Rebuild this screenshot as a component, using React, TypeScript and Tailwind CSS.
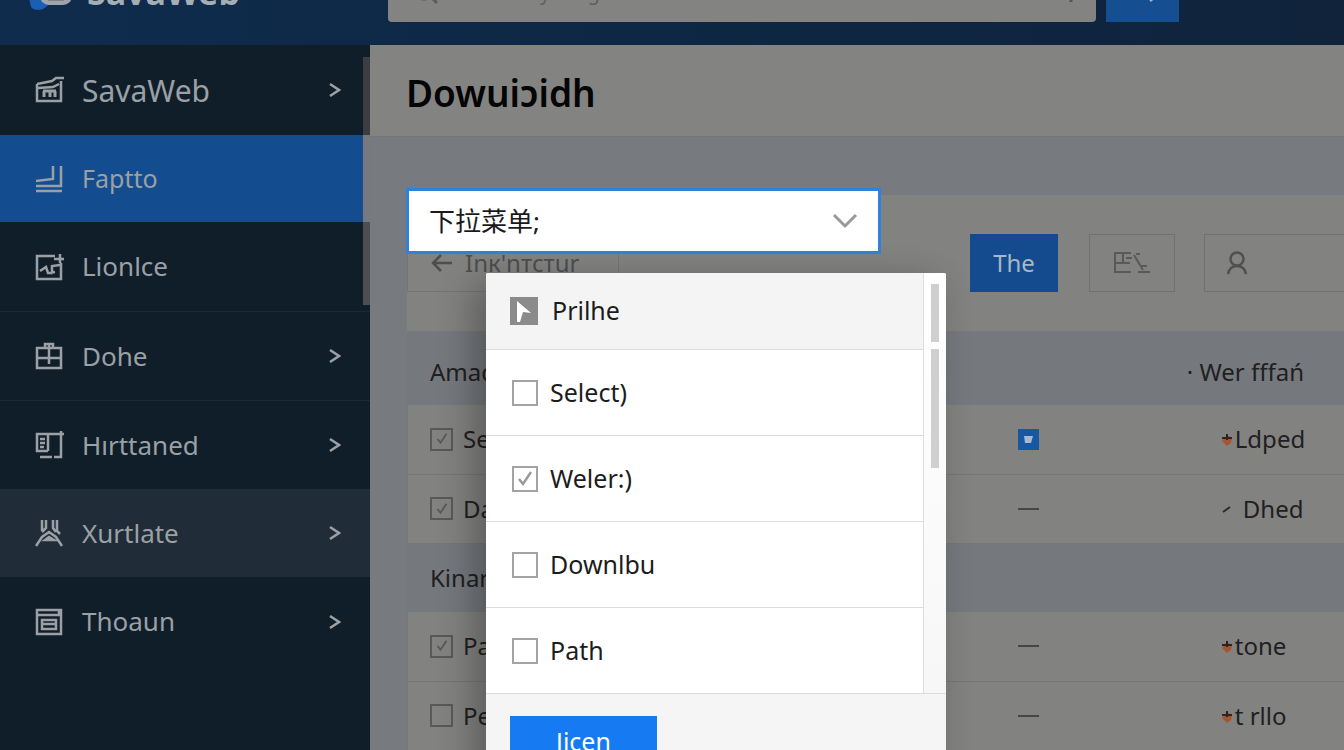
import type { ReactNode } from "react";
import clsx from "clsx";

type IconName =
  | "shop"
  | "stack"
  | "image"
  | "gift"
  | "frames"
  | "compass"
  | "document";

const iconPaths: Record<IconName, ReactNode> = {
  shop: (
    <>
      <path d="M2 8v17h24V5M2 8l15-3 4-3h8M3 12l15-1 6-3" />
      <path d="M8 15h13M9 15v6M15 16v5M20 15v6" strokeWidth="3" />
    </>
  ),
  stack: <path d="M1 26h26M1 21h25V1M1 16l17-2V1" />,
  image: (
    <>
      <path d="M20 3H2v23h24V10M19 6h10M25 1v9" />
      <path d="m5 18 6-4 2 6h4v-7l8-1M14 20l6-1" />
    </>
  ),
  gift: <path d="M2 6h24v20H2zM2 16h24M14 2v20M10 6V2h8v4" />,
  frames: (
    <>
      <path d="M13 20H2V3h27M13 3v17M19 26h7V0M5 26h12" />
      <path d="M5 8h5M5 12h5M5 16h4" />
    </>
  ),
  compass: (
    <path d="M7 1v11M11 1v8l-4 4M18 1v8l3 4M22 1v11l3 3M1 27l6-9 7-5 7 5 6 9M10 21l4-3 5 3z" />
  ),
  document: (
    <path d="M2 2h24v24H2zM3 7h21V3M7 12h14v9H7zM7 16h14" />
  ),
};

const navItems: {
  label: string;
  icon: IconName;
  arrow: boolean;
  className: string;
}[] = [
  { label: "SavaWeb", icon: "shop", arrow: true, className: "h-[90px] text-[30px]" },
  {
    label: "Faptto",
    icon: "stack",
    arrow: false,
    className: "mr-[7px] h-[87px] bg-[#144d8f] text-[25px]",
  },
  { label: "Lionlce", icon: "image", arrow: false, className: "h-[89px] text-[26px]" },
  {
    label: "Dohe",
    icon: "gift",
    arrow: true,
    className: "h-[89px] border-t border-[#1c2a35] text-[26px]",
  },
  {
    label: "Hırttaned",
    icon: "frames",
    arrow: true,
    className: "h-[89px] border-t border-[#1c2a35] text-[26px]",
  },
  {
    label: "Xurtlate",
    icon: "compass",
    arrow: true,
    className: "h-[88px] bg-[#202c38] text-[26px]",
  },
  { label: "Thoaun", icon: "document", arrow: true, className: "h-[89px] text-[26px]" },
];

const options = [
  { label: "Select)", checked: false },
  { label: "Weler:)", checked: true },
  { label: "Downlbu", checked: false },
  { label: "Path", checked: false },
];

type Row = {
  name: string;
  checked: boolean;
  flag: boolean;
  status: string;
  mark: "spark" | "tick";
};

const firstRows: Row[] = [
  { name: "Search", checked: true, flag: true, status: "Ldped", mark: "spark" },
  { name: "Data", checked: true, flag: false, status: "Dhed", mark: "tick" },
];

const secondRows: Row[] = [
  { name: "Path", checked: true, flag: false, status: "tone", mark: "spark" },
  { name: "Pe", checked: false, flag: false, status: "t rllo", mark: "spark" },
];

function Header() {
  return (
    <header className="flex h-[45px] shrink-0 items-end overflow-hidden bg-linear-to-r from-[#102c4d] via-[#0d2744] to-[#10233b] pb-[23px]">
      <div className="flex h-[60px] w-[388px] shrink-0 items-center gap-3.5 pl-7">
        <svg width="45" height="40" viewBox="0 0 45 40" aria-hidden="true">
          <path d="M4 0h32v28c-7 0-13 2-18 7-4 4-12 4-15 0L1 26z" fill="#1a5fb4" />
          <rect x="12" y="2" width="32" height="31" rx="9" fill="#9ea4aa" />
          <path d="M20 28h16" stroke="#7d8286" strokeWidth="2" />
        </svg>
        <span className="text-[34px] leading-8 font-bold text-[#a5adb5]">SavaWeb</span>
      </div>
      <div className="flex h-[60px] w-[708px] items-center rounded-sm bg-[#838382] pr-5 pl-6">
        <svg width="28" height="28" viewBox="0 0 28 28" fill="none" stroke="#5c5d5e" strokeWidth="3" aria-hidden="true">
          <circle cx="12" cy="12" r="9" />
          <path d="m18 18 7 7" />
        </svg>
        <input
          type="search"
          aria-label="Search"
          placeholder="Search anything"
          className="ml-2 h-8 min-w-0 flex-1 bg-transparent text-[20px] placeholder:text-[#5f6061]"
        />
        <svg width="10" height="24" viewBox="0 0 10 24" fill="none" stroke="#545556" strokeWidth="3" aria-hidden="true">
          <path d="M5 2v20" />
        </svg>
      </div>
      <button
        type="button"
        aria-label="Run search"
        className="ml-2.5 flex h-[60px] w-[73px] shrink-0 items-center justify-center bg-[#164f91]"
      >
        <svg width="26" height="22" viewBox="0 0 26 22" fill="none" stroke="#9eb6d2" strokeWidth="3" aria-hidden="true">
          <circle cx="11" cy="8" r="7" />
          <path d="m16 13 6 7" />
        </svg>
      </button>
    </header>
  );
}

function Sidebar() {
  return (
    <nav className="relative w-[370px] shrink-0 bg-[#101e2a] text-[#9ba0a5]">
      {navItems.map((item) => (
        <a
          key={item.label}
          href="#"
          className={clsx("flex items-center pl-[35px]", item.className)}
        >
          <svg
            width="30"
            height="28"
            viewBox="0 0 30 28"
            fill="none"
            stroke="currentColor"
            strokeWidth="2.5"
            aria-hidden="true"
          >
            {iconPaths[item.icon]}
          </svg>
          <span className="ml-[17px] flex-1">{item.label}</span>
          {item.arrow && (
            <svg
              width="12"
              height="16"
              viewBox="0 0 12 16"
              fill="none"
              stroke="currentColor"
              strokeWidth="2.5"
              className="mr-[29px]"
              aria-hidden="true"
            >
              <path d="m1 2 9 6-9 6" />
            </svg>
          )}
        </a>
      ))}
      <div className="absolute top-3 right-0 w-[7px]">
        <div className="h-[78px] bg-[#3a3e43]" />
        <div className="h-[87px] bg-[#77797c]" />
        <div className="h-[83px] bg-[#4b4e52]" />
      </div>
    </nav>
  );
}

function CheckBox({
  label,
  checked,
  dimmed = false,
}: {
  label: string;
  checked: boolean;
  dimmed?: boolean;
}) {
  return (
    <label className="flex items-center">
      <span className="grid shrink-0 place-items-center">
        <input
          type="checkbox"
          defaultChecked={checked}
          className={clsx(
            "peer col-start-1 row-start-1 appearance-none border-2",
            dimmed ? "size-[23px] border-[#58595a]" : "size-[26px] border-[#a3a3a3]",
          )}
        />
        <svg
          viewBox="0 0 16 16"
          fill="none"
          stroke="currentColor"
          strokeWidth="2.5"
          className={clsx(
            "pointer-events-none invisible col-start-1 row-start-1 peer-checked:visible",
            dimmed ? "size-3 text-[#58595a]" : "size-4 text-[#999999]",
          )}
          aria-hidden="true"
        >
          <path d="m2 8 4 5 8-12" />
        </svg>
      </span>
      <span className={dimmed ? "ml-2.5" : "ml-3"}>{label}</span>
    </label>
  );
}

function Mark({ kind }: { kind: Row["mark"] }) {
  return (
    <svg width="12" height="16" viewBox="0 0 12 16" fill="none" aria-hidden="true">
      {kind === "spark" ? (
        <>
          <path d="m6 4 5 3-1 5-4 3-5-5z" fill="#a5552f" />
          <path d="M1 7h10M6 3v6" stroke="#2e2522" strokeWidth="2" />
        </>
      ) : (
        <path d="m2 11 7-5" stroke="#2b2b2c" strokeWidth="2" />
      )}
    </svg>
  );
}

function DataRows({ rows }: { rows: Row[] }) {
  return rows.map((row) => (
    <tr key={row.name} className="h-[69px] border-b border-[#757676]">
      <td className="pl-[22px]">
        <CheckBox label={row.name} checked={row.checked} dimmed />
      </td>
      <td className="pl-0.5">
        {row.flag ? (
          <svg width="21" height="21" viewBox="0 0 21 21" aria-hidden="true">
            <path d="M0 0h21v21H0z" fill="#1757a3" />
            <path d="M6 7h9l-2 7H7z" fill="#a9b9cc" />
          </svg>
        ) : (
          <svg width="21" height="2" viewBox="0 0 21 2" aria-label="None">
            <path d="M0 0h21v2H0z" fill="#454647" />
          </svg>
        )}
      </td>
      <td className="pl-9">
        <span className={clsx("flex items-center", row.mark === "tick" ? "gap-2.5" : "gap-0.5")}>
          <Mark kind={row.mark} />
          {row.status}
        </span>
      </td>
    </tr>
  ));
}

function Toolbar() {
  return (
    <div className="flex py-[39px]">
      <button
        type="button"
        className="flex h-[58px] w-[212px] shrink-0 items-center gap-3 border border-[#747576] pl-[22px] text-[24px] text-[#4d4e4f]"
      >
        <svg width="23" height="20" viewBox="0 0 23 20" fill="none" stroke="currentColor" strokeWidth="2.5" aria-hidden="true">
          <path d="M22 10H3M11 2l-8 8 8 8" />
        </svg>
        Inк'nтcтur
      </button>
      <button
        type="button"
        className="ml-[351px] h-[58px] w-[88px] shrink-0 bg-[#134b8e] text-[24px] text-[#a7b6c8]"
      >
        The
      </button>
      <button
        type="button"
        aria-label="Edit"
        className="ml-[31px] flex h-[58px] w-[86px] shrink-0 items-center justify-center border border-[#707172] text-[#585959]"
      >
        <svg width="36" height="22" viewBox="0 0 36 22" fill="none" stroke="currentColor" strokeWidth="2" aria-hidden="true">
          <path d="M17 1H1v19h16M1 11h15M9 1v10M12 6h6M20 3l9 15M22 2h4M24 20h12M27 14h6" />
        </svg>
      </button>
      <label className="ml-[29px] flex h-[58px] flex-1 items-center border border-r-0 border-[#707172] pl-[21px] text-[#4f5051]">
        <svg width="22" height="24" viewBox="0 0 22 24" fill="none" stroke="currentColor" strokeWidth="2.5" className="shrink-0" aria-hidden="true">
          <circle cx="11" cy="8" r="6.5" />
          <path d="M2 23c1-5 4-8 9-8s8 3 9 8" />
        </svg>
        <input type="text" aria-label="User" className="w-full min-w-0 bg-transparent pl-3 text-[24px]" />
      </label>
    </div>
  );
}

function DataTable() {
  return (
    <table className="w-full table-fixed border-l border-[#777879] text-left text-[24px] text-[#1f2021]">
      <colgroup>
        <col className="w-[65%]" />
        <col className="w-[18%]" />
        <col />
      </colgroup>
      <thead>
        <tr className="h-[74px] bg-[#75797d]">
          <th className="pt-2 pl-[22px] font-normal">Amadh</th>
          <th />
          <th className="pt-2 pl-0.5 font-normal whitespace-nowrap">· Wer fffań</th>
        </tr>
      </thead>
      <tbody>
        <DataRows rows={firstRows} />
        <tr className="h-[69px] bg-[#75797d]">
          <th scope="rowgroup" colSpan={3} className="pl-[22px] font-normal">
            Kinarh
          </th>
        </tr>
        <DataRows rows={secondRows} />
      </tbody>
    </table>
  );
}

function DropdownPanel() {
  return (
    <div className="w-[460px] overflow-hidden rounded-xs bg-white text-[25px] text-[#1c1c1c] shadow-[-12px_10px_36px_rgba(0,0,0,0.3)]">
      <div className="flex">
        <div className="flex-1 border-r border-[#dedede]">
          <button
            type="button"
            className="flex h-[76px] w-full items-center bg-[#f4f4f4] pl-6"
          >
            <svg width="28" height="28" viewBox="0 0 28 28" aria-hidden="true">
              <path d="M0 0h28v28H0z" fill="#8b8b8b" />
              <path d="m7 4 14 12-8-1-3 10H7z" fill="#ffffff" />
            </svg>
            <span className="ml-3.5">Prilhe</span>
          </button>
          {options.map((option) => (
            <div
              key={option.label}
              className="flex h-[86px] items-center border-t border-[#dcdcdc] pl-[26px]"
            >
              <CheckBox label={option.label} checked={option.checked} />
            </div>
          ))}
        </div>
        <div className="flex w-[22px] flex-col items-center gap-[7px] bg-linear-to-b from-white to-[#f7f7f7] pt-[11px]">
          <div className="h-[58px] w-2 bg-[#cfcfcf]" />
          <div className="h-[119px] w-2 bg-[#cfcfcf]" />
        </div>
      </div>
      <div className="border-t border-[#dcdcdc] bg-[#f5f5f5] px-6 pt-[22px] pb-6">
        <button type="button" className="h-[52px] w-[147px] bg-[#167bf3] text-white">
          Jicen
        </button>
      </div>
    </div>
  );
}

export default function App() {
  return (
    <div className="flex h-screen flex-col overflow-hidden bg-[#818180] font-['Noto_Sans','Noto_Sans_CJK_SC',sans-serif]">
      <Header />
      <div className="flex min-h-0 flex-1">
        <Sidebar />
        <main className="flex min-w-0 flex-1 flex-col">
          <div className="flex h-[91px] shrink-0 items-center bg-[#838382] pt-1 pl-9">
            <h1 className="text-[37px] leading-10 font-semibold text-[#050505]">Dowuiɔidh</h1>
          </div>
          <div className="relative flex-1 border-t border-[#757678] bg-[#777a7e] pt-[58px] pl-[37px]">
            <div className="bg-[#828281]">
              <Toolbar />
              <DataTable />
            </div>
            <div className="absolute top-[51px] left-9 grid w-[475px] items-center">
              <select
                aria-label="下拉菜单"
                className="col-start-1 row-start-1 h-[66px] w-full appearance-none border-3 border-[#2f82dc] bg-white pl-5 text-[26px] text-[#1a1a1a]"
              >
                <option>下拉菜单;</option>
              </select>
              <svg
                width="26"
                height="16"
                viewBox="0 0 26 16"
                fill="none"
                stroke="#999999"
                strokeWidth="3"
                className="pointer-events-none col-start-1 row-start-1 mr-[23px] justify-self-end"
                aria-hidden="true"
              >
                <path d="m2 2 11 11L24 2" />
              </svg>
            </div>
            <div className="absolute top-[136px] left-[116px]">
              <DropdownPanel />
            </div>
          </div>
        </main>
      </div>
    </div>
  );
}
